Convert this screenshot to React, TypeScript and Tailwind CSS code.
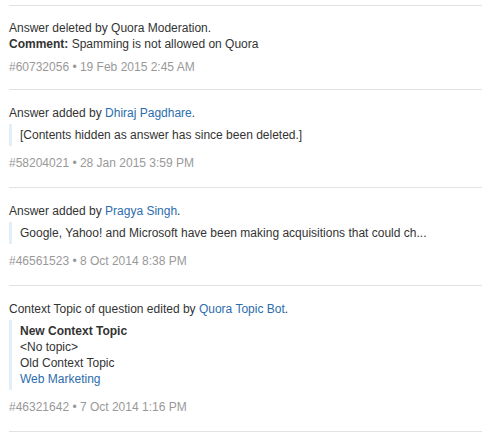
import React from "react";

const font = { fontFamily: '"Liberation Sans", Arial, Helvetica, sans-serif' };

function Meta({ children, first }: { children: React.ReactNode; first?: boolean }) {
  return (
    <div className={first ? "mt-[7px] text-[12px] leading-4 text-[#999999]" : "mt-[9px] text-[12px] leading-4 text-[#999999]"}>
      {children}
    </div>
  );
}

function Quote({ children }: { children: React.ReactNode }) {
  return (
    <div className="mt-[3px] border-l-[3px] border-[#e4eef8] pl-[8px] py-[3px]">{children}</div>
  );
}

const Link = ({ children }: { children: React.ReactNode }) => (
  <span className="text-[#2b6dad]">{children}</span>
);

export default function App() {
  return (
    <div className="bg-white min-h-[437px] pt-[5px]" style={font}>
      <div className="ml-[9px] w-[473px] text-[12px] leading-4 text-[#333333]">
        <div className="border-t border-[#e2e2e2] pt-[14px] pb-[14px]">
          <div>Answer deleted by Quora Moderation.</div>
          <div>
            <span className="font-bold">Comment:</span> Spamming is not allowed on Quora
          </div>
          <Meta first>#60732056 • 19 Feb 2015 2:45 AM</Meta>
        </div>
        <div className="border-t border-[#e2e2e2] pt-[15px] pb-[16px]">
          <div>
            Answer added by <Link>Dhiraj Pagdhare</Link>.
          </div>
          <Quote>[Contents hidden as answer has since been deleted.]</Quote>
          <Meta>#58204021 • 28 Jan 2015 3:59 PM</Meta>
        </div>
        <div className="border-t border-[#e2e2e2] pt-[15px] pb-[16px]">
          <div>
            Answer added by <Link>Pragya Singh</Link>.
          </div>
          <Quote>Google, Yahoo! and Microsoft have been making acquisitions that could ch...</Quote>
          <Meta>#46561523 • 8 Oct 2014 8:38 PM</Meta>
        </div>
        <div className="border-t border-b border-[#e2e2e2] pt-[15px] pb-[16px]">
          <div>
            Context Topic of question edited by <Link>Quora Topic Bot</Link>.
          </div>
          <Quote>
            <div className="font-bold">New Context Topic</div>
            <div>&lt;No topic&gt;</div>
            <div>Old Context Topic</div>
            <div>
              <Link>Web Marketing</Link>
            </div>
          </Quote>
          <Meta>#46321642 • 7 Oct 2014 1:16 PM</Meta>
        </div>
      </div>
    </div>
  );
}
